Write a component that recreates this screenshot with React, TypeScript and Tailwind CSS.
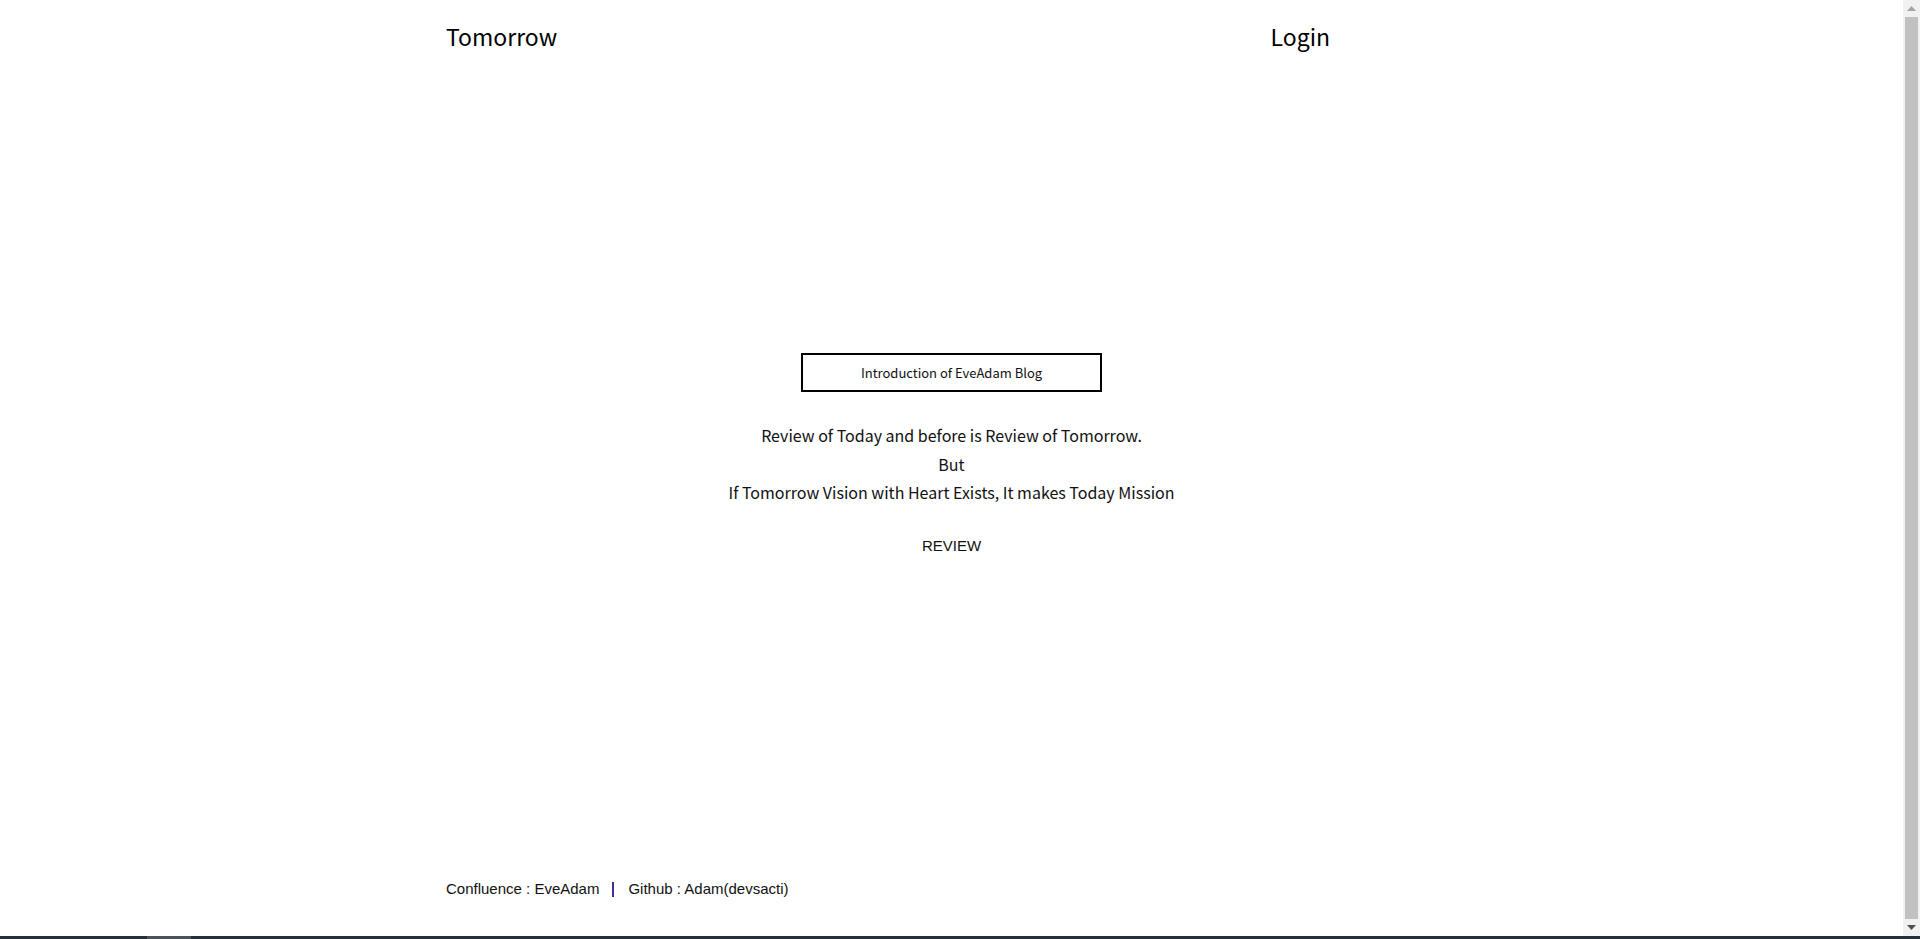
export default function App() {
  const body = { fontFamily: '"Noto Sans CJK KR", "Open Sans", sans-serif' };
  const arial = { fontFamily: '"Liberation Sans", Arial, sans-serif' };

  return (
    <div className="bg-white text-black h-[939px] overflow-hidden flex flex-col">
      <div className="h-[936px] flex">
        <div className="flex-1 flex flex-col">
          <header className="w-[1011px] mx-auto h-[73px] flex items-center" style={body}>
            <a className="text-[23px] leading-none">Tomorrow</a>
            <a className="text-[23px] leading-none ml-auto mr-[127px]">Login</a>
          </header>

          <main className="flex-1 flex flex-col items-center pt-[280px]" style={body}>
            <div className="w-[301px] h-[39px] border-2 border-black flex items-center justify-center text-[13px] text-[#111]">
              Introduction of EveAdam Blog
            </div>
            <div className="mt-[29px] text-center text-[16px] leading-[28.5px] text-[#111]">
              <p>Review of Today and before is Review of Tomorrow.</p>
              <p>But</p>
              <p>If Tomorrow Vision with Heart Exists, It makes Today Mission</p>
            </div>
            <div className="mt-[30px] text-[15px] leading-[18px] text-[#111]" style={arial}>
              REVIEW
            </div>
          </main>

          <footer className="w-[1011px] mx-auto pb-[38px] flex items-center text-[15px] leading-[18px] text-[#111]" style={arial}>
            <span>Confluence : EveAdam</span>
            <span className="ml-[13px] mr-[14px] w-[2px] h-[15px] bg-[#4b2a9a]" />
            <span>Github : Adam(devsacti)</span>
          </footer>
        </div>

        {/* scrollbar */}
        <div className="w-[17px] bg-[#f1f1f1] flex flex-col items-center">
          <div className="h-[17px] flex items-center justify-center">
            <svg width="9" height="5" viewBox="0 0 9 5"><path d="M4.5 0L9 5H0z" fill="#a3a3a3" /></svg>
          </div>
          <div className="flex-1 w-[13px] bg-[#c1c1c1]" />
          <div className="h-[17px] flex items-center justify-center">
            <svg width="9" height="5" viewBox="0 0 9 5"><path d="M0 0h9L4.5 5z" fill="#505050" /></svg>
          </div>
        </div>
      </div>
      <div className="h-[3px] bg-[#22313a] flex">
        <div className="w-[147px]" />
        <div className="w-[44px] bg-[#4a5358]" />
      </div>
    </div>
  );
}
